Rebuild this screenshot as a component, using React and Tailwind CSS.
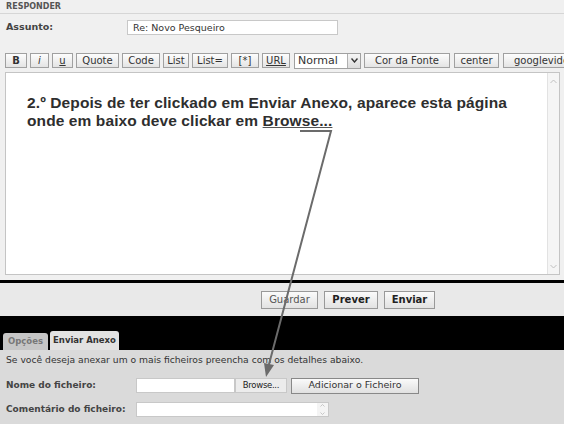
import React from 'react';

const Btn = ({ children, className = '' }) => (
  <div
    className={`shrink-0 flex items-center justify-center border border-[#a0a0a0] bg-gradient-to-b from-[#fdfdfd] to-[#e4e4e4] text-[10px] text-[#333] leading-none h-[15px] ${className}`}
  >
    {children}
  </div>
);

const toolbar = [
  { label: 'B', w: 'w-[22px]', cls: 'font-bold' },
  { label: 'i', w: 'w-[19px]', cls: 'italic' },
  { label: 'u', w: 'w-[21px]', cls: 'underline' },
  { label: 'Quote', w: 'w-[43px]' },
  { label: 'Code', w: 'w-[38px]' },
  { label: 'List', w: 'w-[26px]' },
  { label: 'List=', w: 'w-[36px]' },
  { label: '[*]', w: 'w-[28px]' },
  { label: 'URL', w: 'w-[28px]', cls: 'underline' },
];

export default function App() {
  return (
    <div className="relative w-[564px] h-[424px] overflow-hidden bg-[#f0f0f0] font-['DejaVu_Sans',sans-serif] text-[#333]">
      {/* cabeçalho */}
      <div className="h-[14px] border-b border-[#d6d6d6] pl-[6px] pt-[2px] text-[8px] font-bold text-[#555] leading-[9px]">
        RESPONDER
      </div>

      <div className="flex items-center h-[15px] mt-[6px] pl-[6px]">
        <span className="w-[121px] text-[9.5px] font-bold text-[#444]">Assunto:</span>
        <div className="w-[211px] h-[15px] border border-[#c8c8c8] bg-white pl-[5px] text-[9.5px] leading-[13px] text-[#333]">
          Re: Novo Pesqueiro
        </div>
      </div>

      {/* barra de formatação */}
      <div className="flex items-center mt-[18px] pl-[5px] h-[15px] w-max">
        <div className="flex gap-[3px] shrink-0">
          {toolbar.map((b) => (
            <Btn key={b.label} className={`${b.w} ${b.cls || ''}`}>
              {b.label}
            </Btn>
          ))}
        </div>
        <div className="shrink-0 ml-[4px] flex items-center w-[67px] h-[16px] border border-[#a0a0a0] bg-white">
          <span className="flex-1 pl-[3px] text-[11px] leading-none">Normal</span>
          <div className="w-[13px] h-[14px] border-l border-[#b0b0b0] bg-gradient-to-b from-[#f6f6f6] to-[#dcdcdc] flex items-center justify-center">
            <svg width="7" height="5" viewBox="0 0 7 5">
              <path d="M0.5 0.5 L3.5 4 L6.5 0.5" fill="none" stroke="#333" strokeWidth="1.4" />
            </svg>
          </div>
        </div>
        <Btn className="ml-[3px] w-[86px]">Cor da Fonte</Btn>
        <Btn className="ml-[4px] w-[45px]">center</Btn>
        <Btn className="ml-[4px] w-[82px] justify-start pl-[10px]">googlevideo</Btn>
      </div>

      {/* área de texto */}
      <div className="flex mt-[4px] ml-[5px] w-[555px] h-[203px] border border-[#c4c4c4] bg-white">
        <div className="flex-1 pl-[21px] pt-[21px] font-['Liberation_Sans',Arial,sans-serif] font-bold text-[15.5px] tracking-[0.1px] leading-[18px] text-[#2e2e2e]">
          2.º Depois de ter clickado em Enviar Anexo, aparece esta página
          <br />
          onde em baixo deve clickar em <span className="underline decoration-[#555]">Browse...</span>
        </div>
        <div className="w-[12px] flex flex-col justify-between bg-[#f5f5f5] border-l border-[#e2e2e2] py-[2px]">
          <div className="h-[12px] flex items-center justify-center">
            <svg width="7" height="5" viewBox="0 0 7 5">
              <path d="M0.5 4 L3.5 1 L6.5 4" fill="none" stroke="#c0c0c0" strokeWidth="1" />
            </svg>
          </div>
          <div className="h-[12px] flex items-center justify-center">
            <svg width="7" height="5" viewBox="0 0 7 5">
              <path d="M0.5 1 L3.5 4 L6.5 1" fill="none" stroke="#c0c0c0" strokeWidth="1" />
            </svg>
          </div>
        </div>
      </div>

      <div className="h-[5px]" />
      <div className="h-[3px] bg-black" />

      {/* botões de envio */}
      <div className="h-[33px] bg-[#e9e9e9] flex items-center pl-[261px] gap-[6px]">
        <div className="w-[57px] h-[18px] border border-[#999] bg-gradient-to-b from-[#fafafa] to-[#e2e2e2] text-[10px] text-[#555] flex items-center justify-center">
          Guardar
        </div>
        <div className="w-[54px] h-[18px] border border-[#999] bg-gradient-to-b from-[#fafafa] to-[#e2e2e2] text-[10px] font-bold text-[#222] flex items-center justify-center">
          Prever
        </div>
        <div className="w-[51px] h-[18px] border border-[#999] bg-gradient-to-b from-[#fafafa] to-[#e2e2e2] text-[10px] font-bold text-[#222] flex items-center justify-center">
          Enviar
        </div>
      </div>

      {/* abas */}
      <div className="h-[34px] bg-black flex items-end pl-[3px] gap-[2px]">
        <div className="w-[45px] h-[17px] rounded-t-[3px] bg-[#c6c6c6] text-[8.5px] font-bold text-[#777] flex items-center justify-center">
          Opções
        </div>
        <div className="w-[69px] h-[19px] rounded-t-[3px] bg-[#e2e2e2] text-[8.5px] font-bold text-[#333] flex items-center justify-center">
          Enviar Anexo
        </div>
      </div>

      {/* formulário de anexo */}
      <div className="h-[80px] bg-[#dadada] pl-[6px] pt-[3px]">
        <div className="text-[9.2px] leading-[14px] text-[#333]">
          Se você deseja anexar um o mais ficheiros preencha com os detalhes abaixo.
        </div>
        <div className="flex items-center mt-[11px] h-[15px]">
          <span className="w-[130px] text-[9px] font-bold text-[#444]">Nome do ficheiro:</span>
          <div className="w-[99px] h-[15px] bg-white border border-[#c8c8c8]" />
          <div className="w-[52px] h-[15px] bg-[#ececec] border border-[#c8c8c8] text-[8.5px] tracking-[-0.3px] flex items-center justify-center text-[#222]">
            Browse...
          </div>
          <div className="ml-[4px] w-[128px] h-[16px] border border-[#888] bg-gradient-to-b from-[#fafafa] to-[#e0e0e0] text-[9.5px] flex items-center justify-center text-[#333]">
            Adicionar o Ficheiro
          </div>
        </div>
        <div className="flex items-center mt-[9px] h-[15px]">
          <span className="w-[130px] text-[9px] font-bold text-[#444]">Comentário do ficheiro:</span>
          <div className="flex w-[193px] h-[15px] bg-white border border-[#c8c8c8]">
            <div className="flex-1" />
            <div className="w-[11px] flex flex-col justify-between items-center bg-[#f4f4f4] py-[1px]">
              <svg width="5" height="3" viewBox="0 0 5 3">
                <path d="M0.5 2.5 L2.5 0.5 L4.5 2.5" fill="none" stroke="#bbb" strokeWidth="0.8" />
              </svg>
              <svg width="5" height="3" viewBox="0 0 5 3">
                <path d="M0.5 0.5 L2.5 2.5 L4.5 0.5" fill="none" stroke="#bbb" strokeWidth="0.8" />
              </svg>
            </div>
          </div>
        </div>
      </div>

      {/* seta desenhada por cima */}
      <svg className="absolute inset-0 pointer-events-none" width="564" height="424" viewBox="0 0 564 424">
        <path d="M300 131 L331 131 L268 368" fill="none" stroke="#6b6b6b" strokeWidth="2" />
        <polygon points="266,377 274,365 264,363" fill="#6b6b6b" />
      </svg>
    </div>
  );
}
